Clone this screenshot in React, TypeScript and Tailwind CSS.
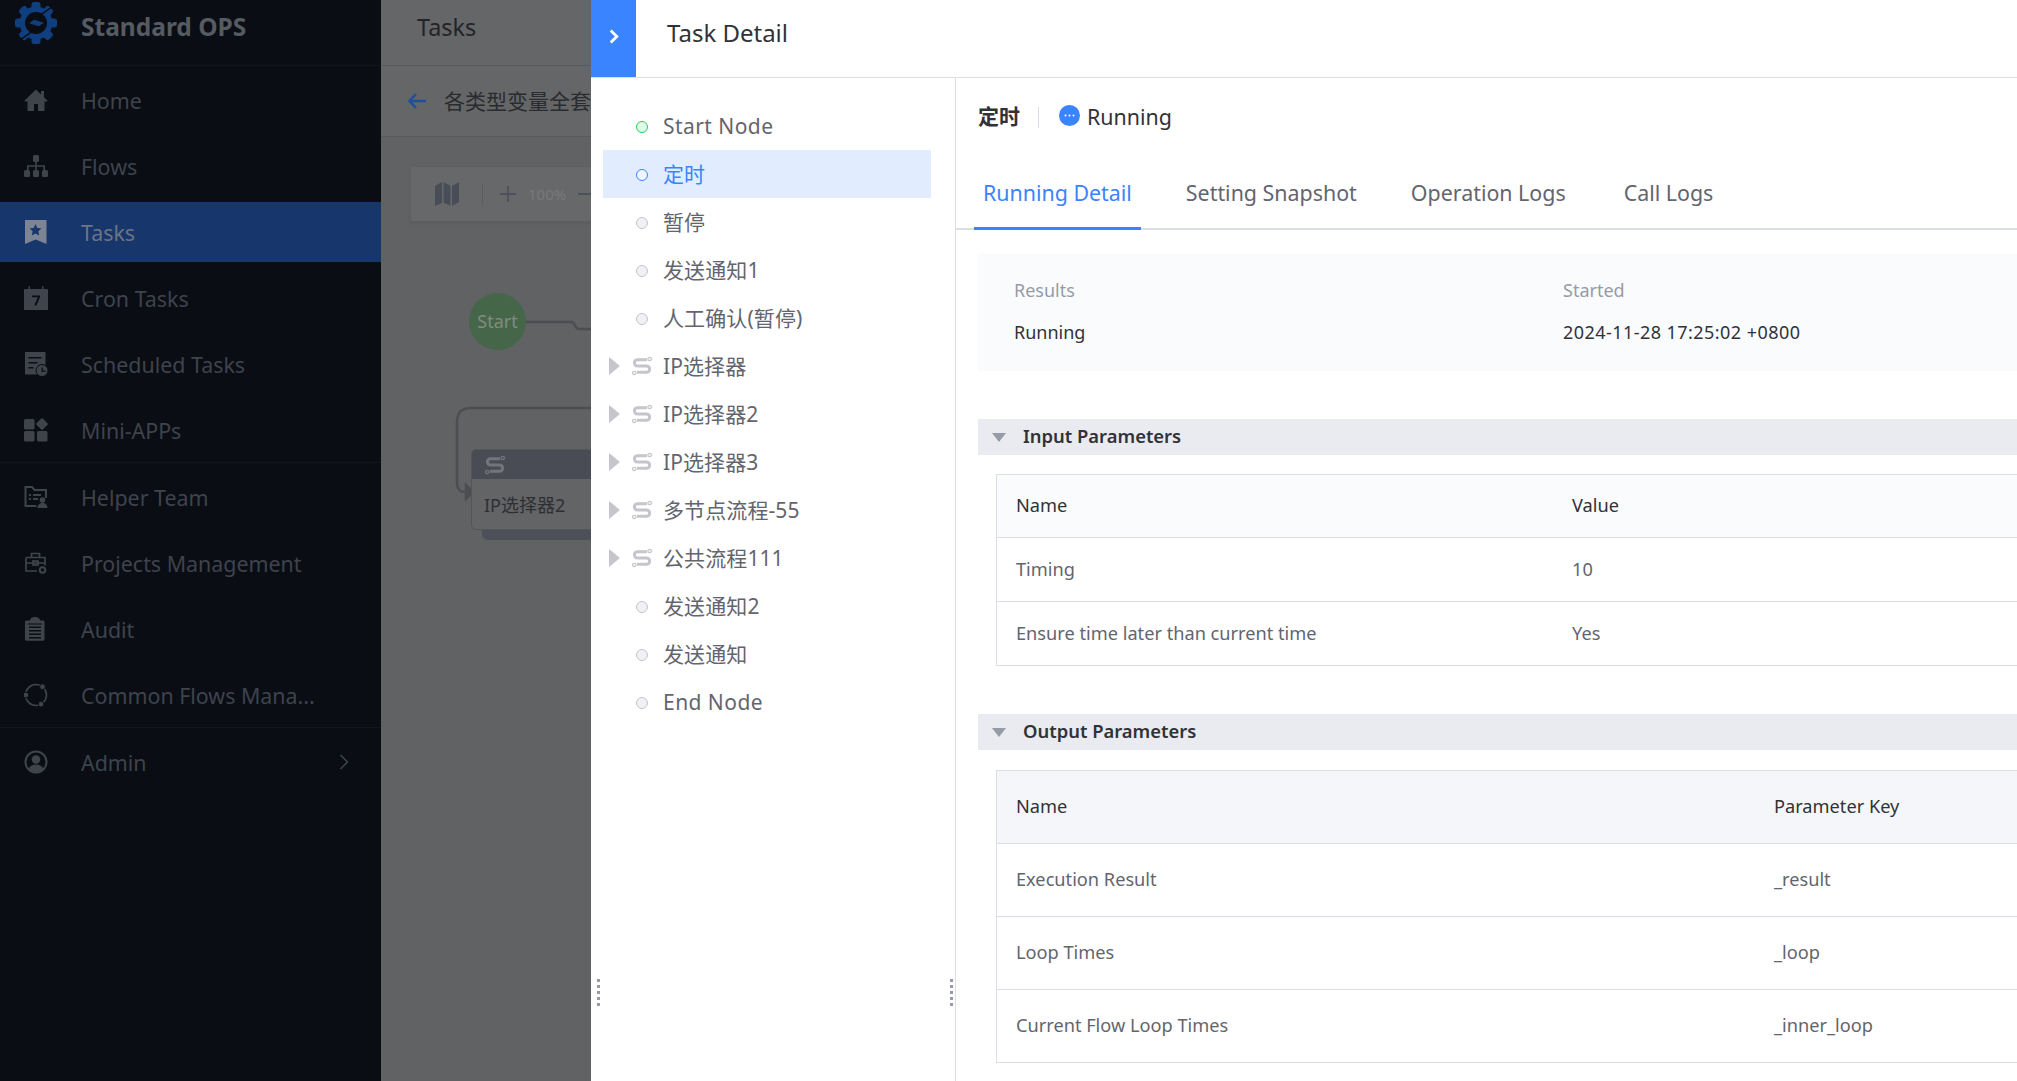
import type { ReactNode } from "react";

const iconClass = "h-6 w-6 shrink-0 fill-current";

function HomeIcon() {
  return (
    <svg viewBox="0 0 24 24" className={iconClass}>
      <path d="M12 1.500 0.800 12.200c-.5.500-.2 1.300.5 1.300H3.500V22c0 .6.400 1 1 1h15c.6 0 1-.4 1-1v-8.500h2.200c.7 0 1-.8.500-1.300L20 9.300V3h-3v3.400L12 1.500zM10 16h4v7h-4z" fillRule="evenodd" />
    </svg>
  );
}

function FlowsIcon() {
  return (
    <svg viewBox="0 0 24 24" className={iconClass}>
      <rect x="9" y="1" width="6" height="7" rx="1.500" />
      <rect x="0" y="16" width="6" height="7" rx="1.500" />
      <rect x="9" y="16" width="6" height="7" rx="1.500" />
      <rect x="18" y="16" width="6" height="7" rx="1.500" />
      <path d="M11.200 8h1.600v3.200H21v4.800h-1.600v-3.200h-6.600V16h-1.600v-3.200H4.600V16H3v-4.800h8.200z" />
    </svg>
  );
}

function TasksIcon() {
  return (
    <svg viewBox="0 0 24 24" className="h-6 w-6 shrink-0">
      <path d="M1 0h21.500v24L11.750 19.500 1 24z" fill="#7d8594" />
      <path d="m11.500 4 1.800 3.900 4.200.5-3.100 2.900.8 4.200-3.700-2.100-3.700 2.100.8-4.200-3.100-2.900 4.200-.5z" fill="#17366b" />
    </svg>
  );
}

function CronIcon() {
  return (
    <svg viewBox="0 0 24 24" className="h-6 w-6 shrink-0">
      <path d="M1 3H4.500V0H6v3h12V0h1.500v3H23c.6 0 1 .4 1 1v19c0 .6-.4 1-1 1H1c-.6 0-1-.4-1-1V4c0-.6.400-1 1-1z" fill="currentColor" />
      <path d="M8 9.500h8v1.600L12.400 19.500h-2.100l3.500-8.200H8z" fill="#0a0d14" />
    </svg>
  );
}

function ScheduledIcon() {
  return (
    <svg viewBox="0 0 24 24" className="h-6 w-6 shrink-0">
      <path d="M1 0h20.500v13a6.500 6.500 0 0 0-8.500 9.500H1z" fill="currentColor" />
      <path d="M4.500 5h13v1.600h-13zM4.500 10h9v1.600h-9zM4.500 15h5v1.600h-5z" fill="#0a0d14" />
      <circle cx="18" cy="18.500" r="5.500" fill="currentColor" />
      <path d="M17.500 15.500h1.300v3h2.700v1.200h-4z" fill="#0a0d14" />
    </svg>
  );
}

function MiniAppsIcon() {
  return (
    <svg viewBox="0 0 24 24" className={iconClass}>
      <rect x="0" y="1" width="10.500" height="10.500" rx="1.500" />
      <rect x="0" y="13" width="10.500" height="10.500" rx="1.500" />
      <rect x="13" y="13" width="10.500" height="10.500" rx="1.500" />
      <rect x="13.500" y="1.500" width="9" height="9" rx="1.500" transform="rotate(45 18 6)" />
    </svg>
  );
}

function HelperIcon() {
  return (
    <svg viewBox="0 0 24 24" className="h-6 w-6 shrink-0">
      <path d="M.5 1h8l2.500 3h12v9h-2V6H10L7.600 3H2.500v17h10v2H.5z" fill="currentColor" />
      <path d="M5 9h2v2H5zM9 9h8v2H9zM5 13h2v2H5zM9 13h5v2H9z" fill="currentColor" />
      <circle cx="18.500" cy="15" r="2.800" fill="currentColor" />
      <path d="M13.500 23c0-3 2-5 5-5s5 2 5 5z" fill="currentColor" />
    </svg>
  );
}

function ProjectsIcon() {
  return (
    <svg viewBox="0 0 24 24" className="h-6 w-6 shrink-0 fill-none stroke-current" strokeWidth="1.700">
      <path d="M2 6.500h19v8M13 20H2V6.500M7.500 6.500V2.500h8v4M2 12h19" />
      <rect x="9" y="10" width="5" height="4" />
      <circle cx="18.500" cy="19" r="2.800" strokeWidth="2" />
    </svg>
  );
}

function AuditIcon() {
  return (
    <svg viewBox="0 0 24 24" className="h-6 w-6 shrink-0">
      <path d="M6 3.500C6 1.500 8 0 11 0s5 1.500 5 3.500h3c1 0 1.500.6 1.500 1.500v17c0 1-.6 1.800-1.500 1.800H2.500C1.500 23.800 1 23 1 22V5c0-1 .6-1.500 1.500-1.500z" fill="currentColor" />
      <path d="M5 9.500h12v1.400H5zM5 13h12v1.400H5zM5 16.500h12v1.400H5zM5 20h12v1.400H5zM4 6.500h14v1H4z" fill="#0a0d14" />
    </svg>
  );
}

function CommonIcon() {
  return (
    <svg viewBox="0 0 24 24" className="h-6 w-6 shrink-0">
      <circle cx="12" cy="12" r="10.500" fill="none" stroke="currentColor" strokeWidth="1.600" />
      <circle cx="18.500" cy="3.700" r="2.900" fill="currentColor" stroke="#0a0d14" />
      <circle cx="1.900" cy="12" r="2.900" fill="currentColor" stroke="#0a0d14" />
      <circle cx="17" cy="21.200" r="2.900" fill="currentColor" stroke="#0a0d14" />
    </svg>
  );
}

function AdminIcon() {
  return (
    <svg viewBox="0 0 24 24" className="h-6 w-6 shrink-0">
      <circle cx="12" cy="12" r="10.500" fill="none" stroke="currentColor" strokeWidth="2" />
      <circle cx="12" cy="9.500" r="4.300" fill="currentColor" />
      <path d="M4.500 19c1-3 4-4.500 7.500-4.500s6.500 1.500 7.500 4.500c-2 2-4.500 3-7.500 3s-5.500-1-7.500-3z" fill="currentColor" />
    </svg>
  );
}

function Logo() {
  const teeth = [0, 45, 90, 135, 180, 225, 270, 315];
  return (
    <svg viewBox="0 0 42 42" className="mt-[2px] h-[42px] w-[42px] shrink-0">
      {teeth.map((deg) => (
        <rect key={deg} x="16.500" y="0" width="9" height="8" rx="2.500" fill="#0f3f7f" transform={`rotate(${deg} 21 21)`} />
      ))}
      <circle cx="21" cy="21" r="16.500" fill="#0f3f7f" />
      <circle cx="21" cy="21" r="11" fill="#0a0d14" />
      <path d="M37 5 12.500 21.500 23.500 25 5 38l25.500-17.500-11-3.500z" fill="#0f3f7f" stroke="#0a0d14" strokeWidth="1.500" />
    </svg>
  );
}

function SideRow({ icon, label, active, trailing }: { icon: ReactNode; label: string; active?: boolean; trailing?: ReactNode }) {
  return (
    <div className={`flex h-[60px] items-center pl-[24px] pr-[32px] ${active ? "bg-[#17366b] text-[#6c7486]" : "text-[#3e434c]"}`}>
      <span className={active ? "text-[#7d8594]" : "text-[#3f434b]"}>{icon}</span>
      <span className="ml-[33px] flex-1 truncate pt-[3px] text-[21.4px]">{label}</span>
      {trailing}
    </div>
  );
}

function Sidebar() {
  return (
    <aside className="flex h-[1081px] w-[381px] shrink-0 flex-col bg-[#0a0d14]">
      <div className="flex h-[66px] shrink-0 items-start border-b border-[#10141c] pl-[15px]">
        <Logo />
        <span className="ml-[24px] mt-[9px] text-[24.5px] font-bold text-[#565a61]">Standard OPS</span>
      </div>
      <nav className="flex flex-col gap-[6px] pt-[4px]">
        <SideRow icon={<HomeIcon />} label="Home" />
        <SideRow icon={<FlowsIcon />} label="Flows" />
        <SideRow icon={<TasksIcon />} label="Tasks" active />
        <SideRow icon={<CronIcon />} label="Cron Tasks" />
        <SideRow icon={<ScheduledIcon />} label="Scheduled Tasks" />
        <SideRow icon={<MiniAppsIcon />} label="Mini-APPs" />
      </nav>
      <div className="mt-[2px] flex flex-col gap-[6px] border-t border-[#10141c] pt-[4px]">
        <SideRow icon={<HelperIcon />} label="Helper Team" />
        <SideRow icon={<ProjectsIcon />} label="Projects Management" />
        <SideRow icon={<AuditIcon />} label="Audit" />
        <SideRow icon={<CommonIcon />} label="Common Flows Mana..." />
      </div>
      <div className="mt-[2px] border-t border-[#10141c] pt-[4px]">
        <SideRow
          icon={<AdminIcon />}
          label="Admin"
          trailing={
            <svg viewBox="0 0 10 16" className="h-[16px] w-[10px] fill-none stroke-[#3f434b]" strokeWidth="1.500">
              <path d="m1.500 1 7 7-7 7" />
            </svg>
          }
        />
      </div>
    </aside>
  );
}

function SubflowGlyph({ className }: { className: string }) {
  return (
    <svg viewBox="0 0 20 20" className={className} fill="none" stroke="currentColor">
      <path d="M15 3.700H5.500a3.150 3.150 0 0 0 0 6.300h9a3.150 3.150 0 0 1 0 6.300H5" strokeWidth="3" />
      <circle cx="17.700" cy="3" r="1.700" strokeWidth="1.300" />
      <circle cx="2.300" cy="17" r="1.700" strokeWidth="1.300" />
    </svg>
  );
}

function Canvas() {
  return (
    <div className="relative flex-1 overflow-hidden bg-[#616264]">
      <div className="absolute left-[30px] top-[30px] flex h-[54px] w-[300px] items-center rounded-[2px] bg-[#676869] pl-[24px] shadow-[0_2px_4px_rgba(0,0,0,0.08)]">
        <svg viewBox="0 0 24 24" className="h-[24px] w-[24px] fill-[#484d57]">
          <path d="M0 4 7 0v21l-7 3zM8.500 0l7 4v20l-7-3.500zM17 4l7-4v20l-7 4z" />
        </svg>
        <span className="ml-[23px] h-[21px] w-px bg-[#5b5c5e]" />
        <svg viewBox="0 0 16 16" className="ml-[17px] h-[16px] w-[16px] stroke-[#4c515b]" strokeWidth="1.800">
          <path d="M8 0v16M0 8h16" />
        </svg>
        <span className="ml-[12px] text-[15px] text-[#78797b]">100%</span>
        <span className="ml-[12px] h-[2px] w-[16px] bg-[#4c515b]" />
      </div>
      <svg viewBox="0 0 140 200" className="absolute left-[70px] top-[180px] h-[200px] w-[140px] fill-none stroke-[#4c4e52]" strokeWidth="2.500">
        <path d="M70 5h50c5 0 3 7 8 7h12" />
        <path d="M140 91H20C10 91 6 96 6 105v60c0 6 2 10 8 10h3" />
        <path d="M15 168l7 7-7 7z" fill="#4c4e52" />
      </svg>
      <div className="absolute left-[88px] top-[156px] flex h-[57px] w-[57px] items-center justify-center rounded-full bg-[#46664a] text-[18px] text-[#7f8d80]">Start</div>
      <div className="absolute left-[101px] top-[393px] h-[10px] w-[200px] rounded-b-[6px] bg-[#4d5058]" />
      <div className="absolute left-[90px] top-[312px] h-[81px] w-[240px] overflow-hidden rounded-[5px] border border-[#545559] bg-[#636466]">
        <div className="flex h-[29px] items-center bg-[#494c54] pl-[13px]">
          <SubflowGlyph className="h-[20px] w-[20px] text-[#72757b]" />
        </div>
        <div className="pl-[12px] pt-[13px] text-[18px] text-[#2e2f33]">IP选择器2</div>
      </div>
    </div>
  );
}

function MainArea() {
  return (
    <div className="flex h-[1081px] flex-1 flex-col bg-[#656667]">
      <div className="flex h-[66px] shrink-0 items-start border-b border-[#585a5c] pl-[36px] pt-[10px] text-[23.4px] text-[#232427]">Tasks</div>
      <div className="flex h-[71px] shrink-0 items-center border-b border-[#585a5c] pl-[27px] text-[21px] text-[#2a2b2e]">
        <svg viewBox="0 0 18 16" className="h-[16px] w-[18px] fill-none stroke-[#1f4f9c]" strokeWidth="2.500">
          <path d="M8 1 1.500 8 8 15M2 8h16" />
        </svg>
        <span className="ml-[18px] whitespace-nowrap pt-[2px]">各类型变量全套</span>
      </div>
      <Canvas />
    </div>
  );
}

type TreeItem = { label: string; kind: "start" | "active" | "idle" | "group" };

const treeItems: TreeItem[] = [
  { label: "Start Node", kind: "start" },
  { label: "定时", kind: "active" },
  { label: "暂停", kind: "idle" },
  { label: "发送通知1", kind: "idle" },
  { label: "人工确认(暂停)", kind: "idle" },
  { label: "IP选择器", kind: "group" },
  { label: "IP选择器2", kind: "group" },
  { label: "IP选择器3", kind: "group" },
  { label: "多节点流程-55", kind: "group" },
  { label: "公共流程111", kind: "group" },
  { label: "发送通知2", kind: "idle" },
  { label: "发送通知", kind: "idle" },
  { label: "End Node", kind: "idle" },
];

function TreeRow({ item }: { item: TreeItem }) {
  const active = item.kind === "active";
  const spaced = item.label.endsWith("Node") ? "tracking-[0.45px]" : "tracking-[0.1px]";
  return (
    <div className={`flex h-[48px] items-center text-[21px] ${active ? "bg-[#e1ecff] text-[#3a84ff]" : "text-[#63656e]"}`}>
      {item.kind === "group" ? (
        <>
          <span className="ml-[6px] h-0 w-0 border-y-[9px] border-l-[11px] border-y-transparent border-l-[#c4c6cc]" />
          <SubflowGlyph className="ml-[12px] h-[20px] w-[20px] text-[#c4c6cc]" />
          <span className={`ml-[11px] pt-[2px] ${spaced}`}>{item.label}</span>
        </>
      ) : (
        <>
          <span
            className={`ml-[33px] mt-[2px] h-[12px] w-[12px] rounded-full border ${
              item.kind === "start"
                ? "border-[#2dcb56] bg-[#e3f9e9]"
                : active
                  ? "border-[#3a84ff] bg-[#f0f5ff]"
                  : "border-[#c4c6cc] bg-[#f0f1f5]"
            }`}
          />
          <span className={`ml-[15px] pt-[2px] ${spaced}`}>{item.label}</span>
        </>
      )}
    </div>
  );
}

function ResizeHandle({ className }: { className: string }) {
  return (
    <div className={`absolute top-[901px] flex flex-col gap-[3px] ${className}`}>
      {[0, 1, 2, 3, 4].map((i) => (
        <span key={i} className="h-[3px] w-[3px] bg-[#979ba5]" />
      ))}
    </div>
  );
}

function SectionBar({ title }: { title: string }) {
  return (
    <div className="flex h-[36px] items-center bg-[#eaebf0] pl-[14px]">
      <span className="h-0 w-0 border-x-[7px] border-t-[9px] border-x-transparent border-t-[#979ba5]" />
      <span className="mb-[2px] ml-[17px] text-[18.4px] font-semibold text-[#313238]">{title}</span>
    </div>
  );
}

function ParamTable({ columns, rows, head, rowH, headH, headBg }: { columns: string; rows: string[][]; head: string[]; rowH: string; headH: string; headBg: string }) {
  return (
    <div className="ml-[18px] border-y border-l border-[#dcdee5] text-[18.2px]">
      <div className={`grid items-center text-[#313238] ${columns} ${headH} ${headBg}`}>
        {head.map((h) => (
          <div key={h} className="pl-[19px]">{h}</div>
        ))}
      </div>
      {rows.map((row) => (
        <div key={row[0]} className={`grid items-center border-t border-[#dcdee5] text-[#63656e] ${columns} ${rowH}`}>
          {row.map((cell) => (
            <div key={cell} className="pl-[19px]">{cell}</div>
          ))}
        </div>
      ))}
    </div>
  );
}

const tabs = ["Running Detail", "Setting Snapshot", "Operation Logs", "Call Logs"];

function DetailPane() {
  return (
    <div className="min-w-0 flex-1 overflow-hidden">
      <div className="flex h-[78px] items-center pl-[22px]">
        <span className="text-[21px] font-bold text-[#313238]">定时</span>
        <span className="ml-[18px] h-[21px] w-px bg-[#dcdee5]" />
        <svg viewBox="0 0 21 21" className="mb-[3px] ml-[20px] h-[21px] w-[21px]">
          <circle cx="10.500" cy="10.500" r="10.500" fill="#3a84ff" />
          <circle cx="6.500" cy="10.500" r="1" fill="#fff" />
          <circle cx="10.500" cy="10.500" r="1" fill="#fff" />
          <circle cx="14.500" cy="10.500" r="1" fill="#fff" />
        </svg>
        <span className="ml-[7px] text-[21.4px] text-[#313238]">Running</span>
      </div>
      <div className="flex h-[74px] items-start gap-[36px] border-b-2 border-[#dcdee5] pl-[18px] text-[21.4px]">
        {tabs.map((t, i) => (
          <div
            key={t}
            className={`flex h-[74px] items-center border-b-[3px] px-[9px] pt-[3px] ${i === 0 ? "border-[#3a84ff] text-[#3a84ff]" : "border-transparent text-[#63656e]"} ${i === 3 ? "ml-[4px]" : ""}`}
          >
            {t}
          </div>
        ))}
      </div>
      <div className="ml-[22px] mt-[24px]">
        <div className="grid h-[117px] grid-cols-[549px_1fr] bg-[#fafbfd] pl-[36px] pt-[23px] text-[18px]">
          <div className="flex flex-col gap-[14px]">
            <span className="h-[28px] text-[#979ba5]">Results</span>
            <span className="h-[28px] text-[#313238]">Running</span>
          </div>
          <div className="flex flex-col gap-[14px]">
            <span className="h-[28px] text-[#979ba5]">Started</span>
            <span className="h-[28px] tracking-[0.45px] text-[#313238]">2024-11-28 17:25:02 +0800</span>
          </div>
        </div>
        <div className="mt-[48px]">
          <SectionBar title="Input Parameters" />
          <div className="mt-[19px]">
            <ParamTable
              columns="grid-cols-[556px_1fr]"
              headH="h-[62px]"
              rowH="h-[64px]"
              headBg="bg-[#fafbfd]"
              head={["Name", "Value"]}
              rows={[
                ["Timing", "10"],
                ["Ensure time later than current time", "Yes"],
              ]}
            />
          </div>
        </div>
        <div className="mt-[48px]">
          <SectionBar title="Output Parameters" />
          <div className="mt-[20px]">
            <ParamTable
              columns="grid-cols-[758px_1fr]"
              headH="h-[72px]"
              rowH="h-[73px]"
              headBg="bg-[#f5f6fa]"
              head={["Name", "Parameter Key"]}
              rows={[
                ["Execution Result", "_result"],
                ["Loop Times", "_loop"],
                ["Current Flow Loop Times", "_inner_loop"],
              ]}
            />
          </div>
        </div>
      </div>
    </div>
  );
}

function TaskDrawer() {
  return (
    <div className="absolute left-[591px] top-0 flex h-[1081px] w-[1426px] flex-col overflow-hidden bg-white">
      <div className="flex h-[78px] shrink-0 items-start border-b border-[#dcdee5]">
        <div className="flex h-[77px] w-[45px] items-center justify-center bg-[#3a84ff] pb-[5px]">
          <svg viewBox="0 0 10 16" className="h-[15px] w-[10px] fill-none stroke-white" strokeWidth="3">
            <path d="m1.500 1.500 6.500 6.500-6.500 6.500" />
          </svg>
        </div>
        <span className="ml-[31px] mt-[17px] text-[24px] leading-[32px] text-[#313238]">Task Detail</span>
      </div>
      <div className="flex min-h-0 flex-1">
        <div className="relative w-[365px] shrink-0 border-r border-[#dcdee5] pt-[24px]">
          <div className="ml-[12px] w-[328px]">
            {treeItems.map((item) => (
              <TreeRow key={item.label} item={item} />
            ))}
          </div>
          <ResizeHandle className="left-[6px]" />
          <ResizeHandle className="left-[359px]" />
        </div>
        <DetailPane />
      </div>
    </div>
  );
}

export default function App() {
  return (
    <div className="relative flex h-[1081px] w-[2017px] overflow-hidden font-['Noto_Sans','Noto_Sans_CJK_SC',sans-serif]">
      <Sidebar />
      <MainArea />
      <TaskDrawer />
    </div>
  );
}
